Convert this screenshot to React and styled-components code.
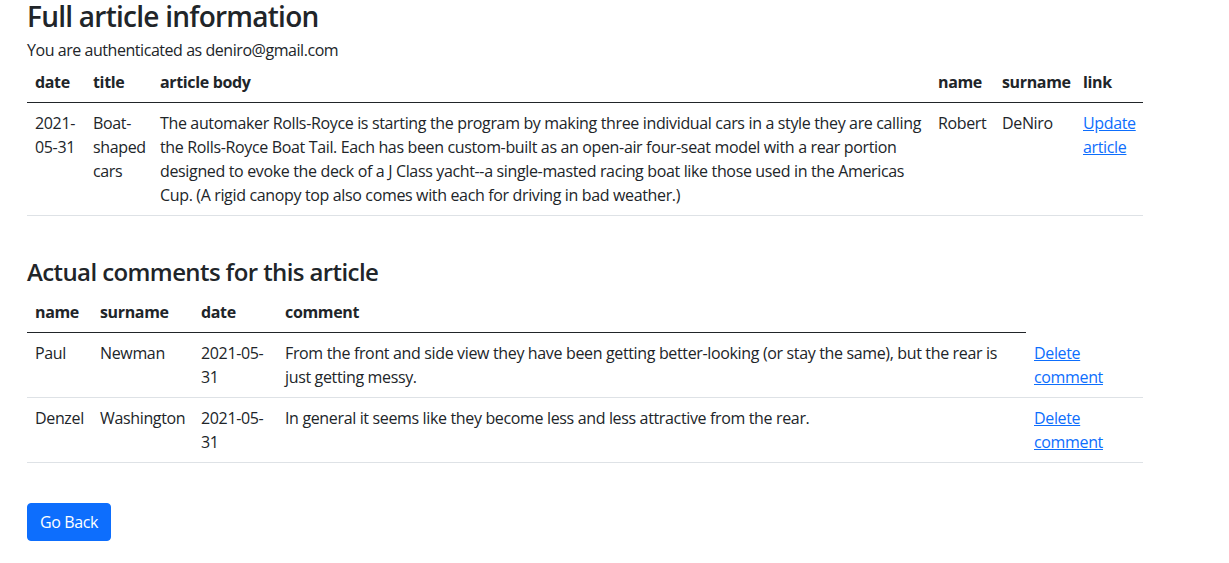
import React from "react";
import styled, { createGlobalStyle } from "styled-components";

const Global = createGlobalStyle`
  html, body { margin: 0; padding: 0; background: #fff; }
  body {
    font-family: "Open Sans", "Noto Sans", sans-serif;
    font-size: 16px;
    line-height: 1.5;
    color: #212529;
  }
  *, *::before, *::after { box-sizing: border-box; }
`;

const Page = styled.div`
  width: 1143px;
  padding-left: 27px;
`;

const Title = styled.h3`
  margin: 0 0 4px;
  font-size: 28px;
  font-weight: 600;
  line-height: 1.2;
  letter-spacing: -0.75px;
`;

const Subtitle = styled.h4`
  margin: 42px 0 6px;
  font-size: 24px;
  font-weight: 600;
  line-height: 1.2;
  letter-spacing: -0.6px;
`;

const Auth = styled.p`
  margin: 0;
  letter-spacing: -0.45px;
`;

const Table = styled.table`
  width: 1116px;
  table-layout: fixed;
  border-collapse: collapse;
  margin-bottom: 16px;
  letter-spacing: -0.35px;
`;

const Th = styled.th`
  text-align: left;
  font-weight: 700;
  padding: 8px;
  vertical-align: bottom;
  border-bottom: 1px solid #212529;
`;

const Td = styled.td`
  padding: 8px;
  vertical-align: top;
  border-bottom: 1px solid #dee2e6;
`;

const Link = styled.a`
  color: #0d6efd;
  text-decoration: underline;
  cursor: pointer;
`;

const Button = styled.button`
  margin-top: 24px;
  font-family: inherit;
  font-size: 16px;
  line-height: 1.5;
  padding: 6px 12px;
  color: #fff;
  background: #0d6efd;
  border: 1px solid #0d6efd;
  border-radius: 4px;
  letter-spacing: -0.4px;
`;

const comments = [
  {
    name: "Paul",
    surname: "Newman",
    date: "2021-05-31",
    text:
      "From the front and side view they have been getting better-looking (or stay the same), but the rear is just getting messy.",
  },
  {
    name: "Denzel",
    surname: "Washington",
    date: "2021-05-31",
    text: "In general it seems like they become less and less attractive from the rear.",
  },
];

export default function App() {
  return (
    <>
      <Global />
      <Page>
        <Title>Full article information</Title>
        <Auth>You are authenticated as deniro@gmail.com</Auth>
        <Table>
          <colgroup>
            <col style={{ width: 58 }} />
            <col style={{ width: 67 }} />
            <col style={{ width: 778 }} />
            <col style={{ width: 64 }} />
            <col style={{ width: 81 }} />
            <col style={{ width: 68 }} />
          </colgroup>
          <thead>
            <tr>
              <Th>date</Th>
              <Th>title</Th>
              <Th>article body</Th>
              <Th>name</Th>
              <Th>surname</Th>
              <Th>link</Th>
            </tr>
          </thead>
          <tbody>
            <tr>
              <Td>2021-05-31</Td>
              <Td>Boat-shaped cars</Td>
              <Td>
                The automaker Rolls-Royce is starting the program by making three individual cars in a
                style they are calling the Rolls-Royce Boat Tail. Each has been custom-built as an
                open-air four-seat model with a rear portion designed to evoke the deck of a J Class
                yacht--a single-masted racing boat like those used in the Americas Cup. (A rigid canopy
                top also comes with each for driving in bad weather.)
              </Td>
              <Td>Robert</Td>
              <Td>DeNiro</Td>
              <Td>
                <Link>Update article</Link>
              </Td>
            </tr>
          </tbody>
        </Table>

        <Subtitle>Actual comments for this article</Subtitle>
        <Table>
          <colgroup>
            <col style={{ width: 65 }} />
            <col style={{ width: 101 }} />
            <col style={{ width: 84 }} />
            <col style={{ width: 749 }} />
            <col style={{ width: 117 }} />
          </colgroup>
          <thead>
            <tr>
              <Th>name</Th>
              <Th>surname</Th>
              <Th>date</Th>
              <Th>comment</Th>
            </tr>
          </thead>
          <tbody>
            {comments.map((c) => (
              <tr key={c.name}>
                <Td>{c.name}</Td>
                <Td>{c.surname}</Td>
                <Td>{c.date}</Td>
                <Td>{c.text}</Td>
                <Td>
                  <Link>Delete comment</Link>
                </Td>
              </tr>
            ))}
          </tbody>
        </Table>
        <Button>Go Back</Button>
      </Page>
    </>
  );
}
